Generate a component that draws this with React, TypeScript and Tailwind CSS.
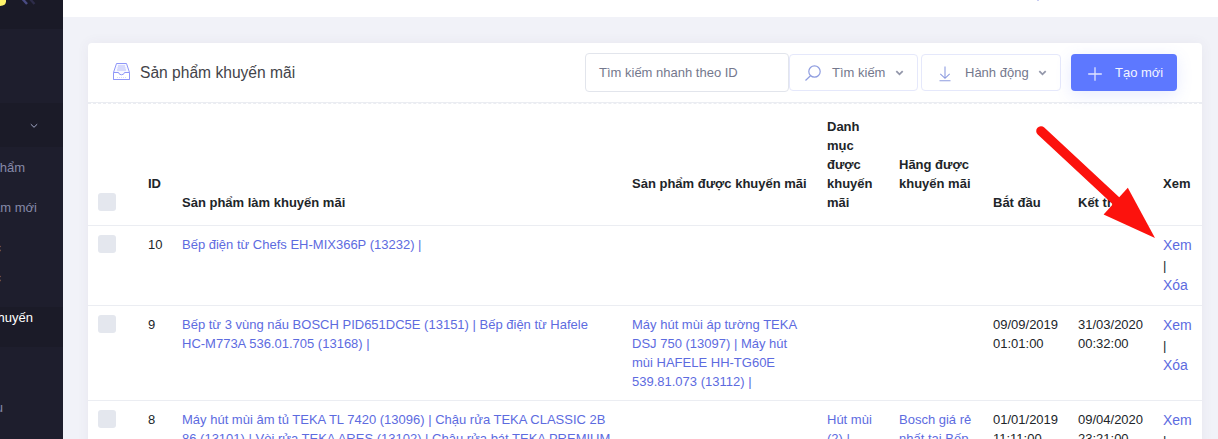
import type { ReactNode } from "react";

const GRID =
  "grid grid-cols-[50px_34px_450px_195px_72px_94px_85px_85px_39px] pl-[10px]";

function Checkbox() {
  return <span className="block size-[18px] rounded-[3px] bg-[#e4e7ee]" />;
}

function Chevron({ className }: { className: string }) {
  return (
    <svg className={className} viewBox="0 0 8 6" fill="none" stroke="currentColor">
      <path d="M0.8 1.2 4 4.3 7.2 1.2" />
    </svg>
  );
}

type Row = {
  id: string;
  main: ReactNode;
  promo?: ReactNode;
  category?: ReactNode;
  brand?: ReactNode;
  start?: ReactNode;
  end?: ReactNode;
  height: string;
};

const rows: Row[] = [
  {
    id: "10",
    main: "Bếp điện từ Chefs EH-MIX366P (13232) |",
    height: "h-[80px]",
  },
  {
    id: "9",
    main: (
      <>
        Bếp từ 3 vùng nấu BOSCH PID651DC5E (13151) | Bếp điện từ Hafele
        <br />
        HC-M773A 536.01.705 (13168) |
      </>
    ),
    promo: (
      <>
        Máy hút mùi áp tường TEKA
        <br />
        DSJ 750 (13097) | Máy hút
        <br />
        mùi HAFELE HH-TG60E
        <br />
        539.81.073 (13112) |
      </>
    ),
    start: <>09/09/2019<br />01:01:00</>,
    end: <>31/03/2020<br />00:32:00</>,
    height: "h-[95px]",
  },
  {
    id: "8",
    main: (
      <>
        Máy hút mùi âm tủ TEKA TL 7420 (13096) | Chậu rửa TEKA CLASSIC 2B
        <br />
        86 (13101) | Vòi rửa TEKA ARES (13102) | Chậu rửa bát TEKA PREMIUM
      </>
    ),
    category: <>Hút mùi<br />(2) |</>,
    brand: <>Bosch giá rẻ<br />nhất tại Bếp</>,
    start: <>01/01/2019<br />11:11:00</>,
    end: <>09/04/2020<br />23:21:00</>,
    height: "h-[95px]",
  },
];

function TableRow({ row }: { row: Row }) {
  return (
    <div
      className={`${GRID} ${row.height} shrink-0 border-t border-[#ebedf2] pt-[9px] leading-[19px] whitespace-nowrap text-[#5d6bdf]`}
    >
      <div>
        <Checkbox />
      </div>
      <div className="text-[#212529]">{row.id}</div>
      <div>{row.main}</div>
      <div>{row.promo}</div>
      <div>{row.category}</div>
      <div>{row.brand}</div>
      <div className="text-[#212529]">{row.start}</div>
      <div className="text-[#212529]">{row.end}</div>
      <div className="flex flex-col text-[14px] leading-[20px]">
        <span>Xem</span>
        <span className="pt-[1px] text-[13px] leading-[20px] text-[#212529]">|</span>
        <span className="-mt-px">Xóa</span>
      </div>
    </div>
  );
}

function Sidebar() {
  return (
    <aside className="flex w-[63px] shrink-0 flex-col overflow-hidden bg-[#1e1e2d] text-[13px] whitespace-nowrap text-[#868aa8]">
      <div className="h-[29px] shrink-0 bg-[#1a1a27]">
        <svg className="h-[29px] w-[63px]" viewBox="0 0 63 29" fill="none">
          <path d="M-4 -4H6V1.5Q6 6-1 6H-4Z" fill="#fff36b" />
          <path d="M22.5 -1 27 4" stroke="#494b83" strokeWidth="2.4" />
          <path d="M30 -1 34.5 4" stroke="#2d2c49" strokeWidth="2.4" />
        </svg>
      </div>
      <div className="h-[74px] shrink-0" />
      <div className="flex h-[44px] shrink-0 items-center justify-end bg-[#1b1b28] pt-[2px] pr-[25px]">
        <Chevron className="h-[6px] w-[8px] text-[#a3a9c9]" />
      </div>
      <div className="flex h-[41px] shrink-0 items-center justify-end pr-[38px]">Sản phẩm</div>
      <div className="flex h-[40px] shrink-0 items-center justify-end pr-[26px]">Thêm sản phẩm mới</div>
      <div className="flex h-[39px] shrink-0 items-center justify-end pr-[62px]">Danh mục</div>
      <div className="flex h-[22px] shrink-0 items-center justify-end pr-[62px]">Thuộc</div>
      <div className="h-[18px] shrink-0" />
      <div className="flex h-[40px] shrink-0 items-center justify-end bg-[#1b1b28] pr-[30px] pb-[18px] text-white">
        Sản phẩm khuyến
      </div>
      <div className="flex h-[122px] shrink-0 items-center justify-end pr-[60px]">Yêu cầu</div>
    </aside>
  );
}

export default function App() {
  return (
    <div className="relative flex h-[439px] w-[1218px] overflow-hidden bg-[#f1f2f8] font-['Liberation_Sans',sans-serif] text-[13px]">
      <Sidebar />
      <div className="flex min-w-0 flex-1 flex-col">
        <header className="flex h-[17px] shrink-0 justify-end bg-white pr-[179px]">
          <span className="h-px w-[2px] bg-[#c9cdf3]" />
        </header>
        <main className="mt-[26px] mr-[16px] ml-[25px] flex flex-1 flex-col rounded-t-[4px] bg-white shadow-[0_0_13px_0_rgba(82,63,105,0.06)]">
          <div className="flex h-[60px] shrink-0 items-center border-b border-[#ebedf2] pr-[25px] pl-[25px]">
            <svg className="-mt-[2px] size-[17px]" viewBox="0 0 17 17" fill="none" stroke="#8f97f8">
              <path d="M0.5 9.5 3.5 0.5H13.5L16.5 9.5V16.5H0.5Z" fill="#f7f8ff" />
              <path d="M0.5 9.5H5.5Q6 11.8 8.5 11.8T11.5 9.5H16.5V16.5H0.5Z" fill="white" />
              <path d="M5 3H12M4.5 5H12.5M4 7H13" stroke="#b5bbfa" />
              <path d="M4 14.5H13" stroke="#d5d8fb" strokeDasharray="1 1" />
            </svg>
            <h1 className="ml-[10px] text-[15.6px] leading-[20px] text-[#434349]">Sản phẩm khuyến mãi</h1>
            <div className="ml-auto flex items-center text-[#74788d]">
              <div className="flex h-[39px] w-[204px] items-center rounded-[4px] border border-[#e2e5ec] pl-[13px]">
                Tìm kiếm nhanh theo ID
              </div>
              <div className="flex h-[37px] w-[129px] items-center rounded-[4px] border border-[#e5e8fb] pl-[15px]">
                <svg className="size-[16px]" viewBox="0 0 16 16" fill="none" stroke="#8f9de0" strokeWidth="1.2">
                  <circle cx="9.5" cy="6.5" r="5.7" />
                  <path d="M5.5 10.7 0.5 15.5" />
                </svg>
                <span className="ml-[11px]">Tìm kiếm</span>
                <Chevron className="ml-[10px] h-[6px] w-[9px] stroke-[1.8] text-[#9397aa]" />
              </div>
              <div className="ml-[3px] flex h-[37px] w-[140px] items-center rounded-[4px] border border-[#e5e8fb] pl-[17px]">
                <svg className="h-[16px] w-[12px] translate-y-px" viewBox="0 0 12 16" fill="none" stroke="#8f9de0" strokeWidth="1.1">
                  <path d="M6 0.5V12M1.3 7.8 6 12.3 10.7 7.8M0.5 14.8H11.5" />
                </svg>
                <span className="ml-[14px]">Hành động</span>
                <Chevron className="ml-[9px] h-[6px] w-[9px] stroke-[1.8] text-[#9397aa]" />
              </div>
              <div className="ml-[10px] flex h-[37px] w-[106px] items-center rounded-[4px] bg-[#5d78ff] pl-[17px] text-[#f3f5ff] shadow-[0_4px_16px_0_rgba(93,120,255,0.15)]">
                <svg className="size-[14px] translate-y-px" viewBox="0 0 14 14" stroke="#dfe4ff" strokeWidth="1.3">
                  <path d="M7 0.2V13.8M0.2 7H13.8" />
                </svg>
                <span className="ml-[13px]">Tạo mới</span>
              </div>
            </div>
          </div>
          <div className="flex flex-col border-t border-dashed border-[#ebedf2]">
            <div className={`${GRID} h-[121px] shrink-0 pt-[13px] leading-[19px] font-bold whitespace-nowrap text-[#212529]`}>
              <div className="pt-[76px]"><Checkbox /></div>
              <div className="pt-[57px]">ID</div>
              <div className="pt-[76px]">Sản phẩm làm khuyến mãi</div>
              <div className="pt-[57px]">Sản phẩm được khuyến mãi</div>
              <div>Danh<br />mục<br />được<br />khuyến<br />mãi</div>
              <div className="pt-[38px]">Hãng được<br />khuyến mãi</div>
              <div className="pt-[76px]">Bắt đầu</div>
              <div className="pt-[76px]">Kết thúc</div>
              <div className="pt-[57px]">Xem</div>
            </div>
            {rows.map((row) => (
              <TableRow key={row.id} row={row} />
            ))}
          </div>
        </main>
      </div>
      <svg className="absolute top-[120px] left-[1030px] h-[120px] w-[130px]" viewBox="0 0 130 120" fill="none">
        <path d="M11 11 90 84.5" stroke="#fc120d" strokeWidth="9.6" strokeLinecap="round" />
        <path d="M97.8 67.8 125 118 73.6 94.5Z" fill="#fc120d" />
      </svg>
    </div>
  );
}
